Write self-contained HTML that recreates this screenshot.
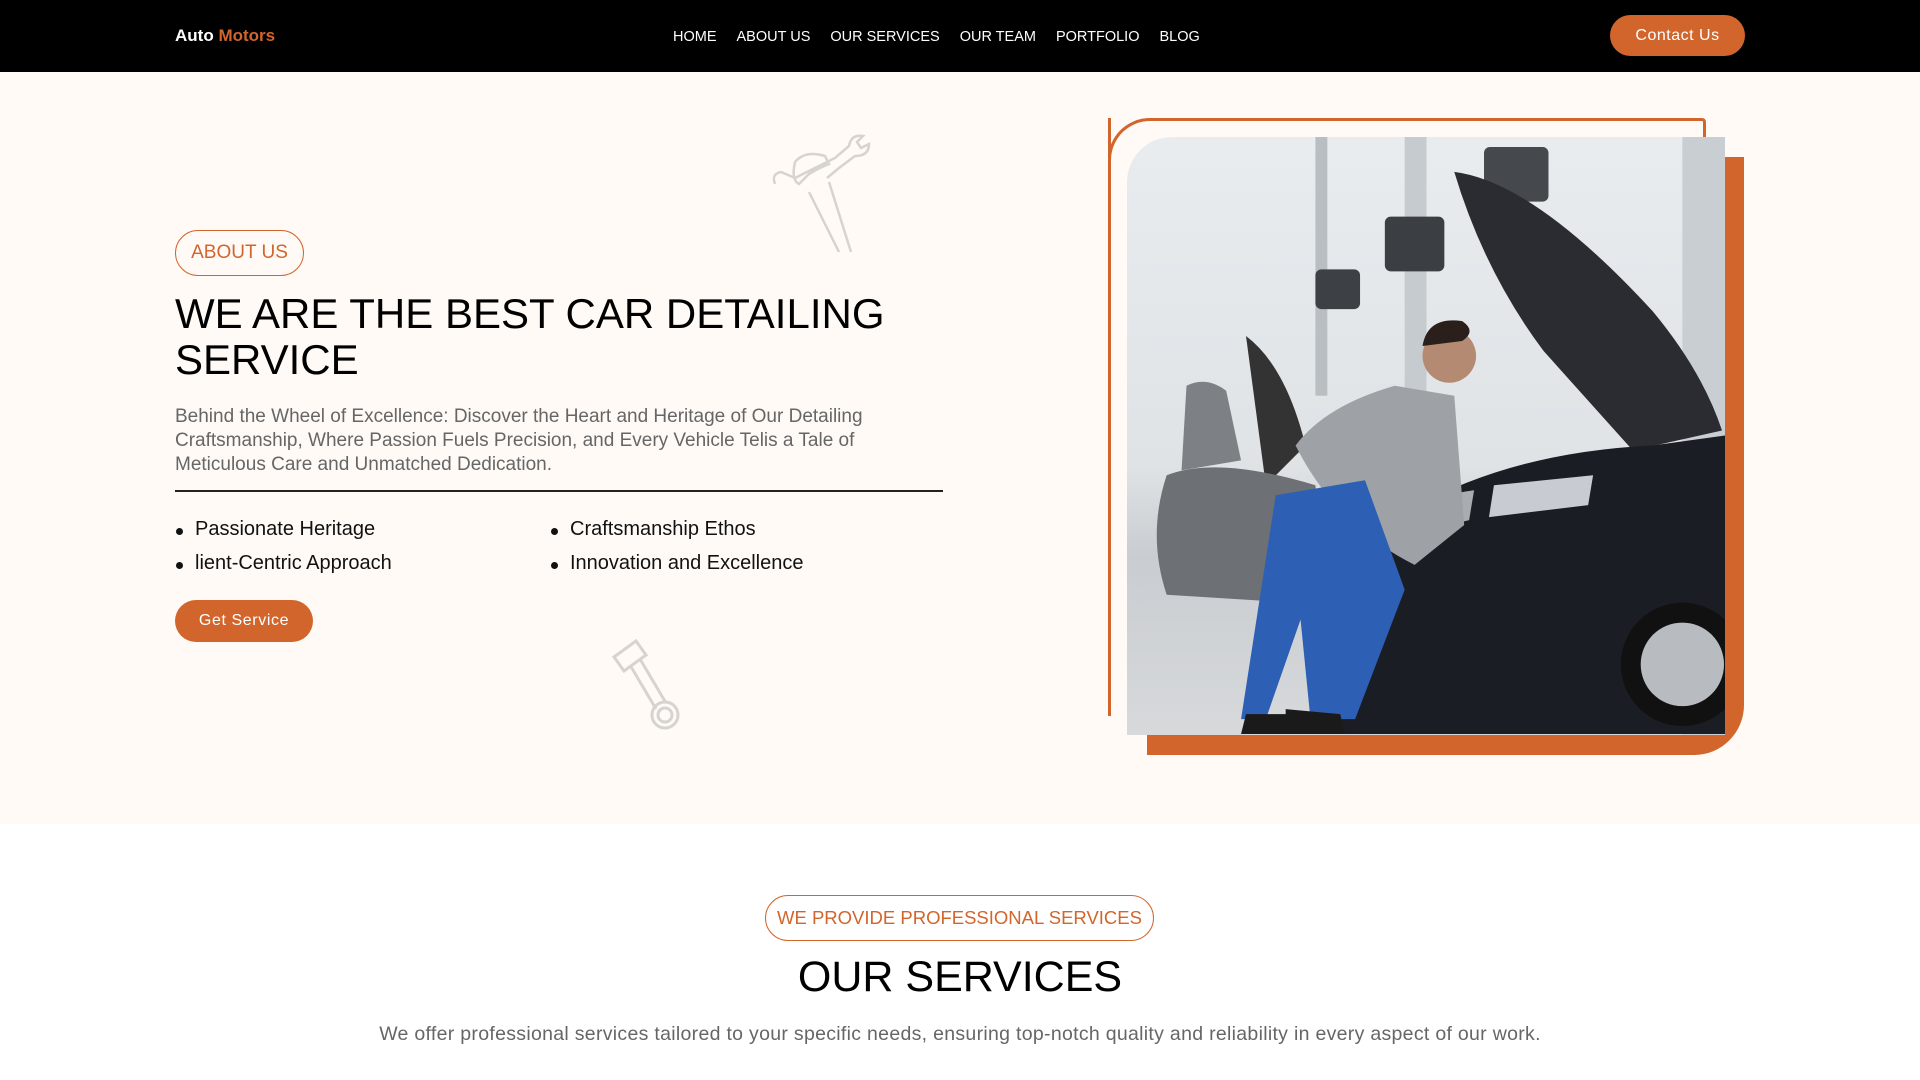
<!DOCTYPE html>
<html><head><meta charset="utf-8"><style>
*{margin:0;padding:0;box-sizing:border-box}
body{width:1920px;height:1080px;overflow:hidden;background:#fff;font-family:"Liberation Sans",sans-serif;position:relative}
.nav{position:absolute;left:0;top:0;width:1920px;height:72px;background:#000;box-shadow:0 2px 3px rgba(0,0,0,.35)}
.logo{position:absolute;left:175px;top:26px;font-size:17px;font-weight:bold;color:#fff}
.logo span{color:#d2652b}
.menu{position:absolute;left:673px;top:29px;font-size:14.5px;color:#fff;white-space:nowrap}
.menu span{margin-right:20px}
.cbtn{position:absolute;left:1610px;top:15px;width:135px;height:41px;border-radius:21px;background:#d2652b;color:#fff;font-size:16px;text-align:center;line-height:42px;letter-spacing:.5px}
.hero{position:absolute;left:0;top:72px;width:1920px;height:752px;background:#fffaf6}
.pill{position:absolute;border:1.5px solid #d2652b;border-radius:24px;color:#d2652b;font-size:19px;text-align:center}
h1{position:absolute;left:175px;top:291px;font-size:42px;font-weight:normal;line-height:46px;color:#000;width:800px}
.p{position:absolute;left:175px;top:405px;width:770px;font-size:19px;line-height:24px;color:#666}
.hr{position:absolute;left:175px;top:490px;width:768px;height:2px;background:#222}
.li{position:absolute;font-size:20px;color:#111;font-weight:500}
.li:before{content:"";position:absolute;left:-19px;top:10px;width:7px;height:7px;border-radius:50%;background:#111}
.gbtn{position:absolute;left:175px;top:600px;width:138px;height:42px;border-radius:21px;background:#d2652b;color:#fff;font-size:16px;text-align:center;line-height:42px;letter-spacing:.6px}
</style></head><body>
<div class="nav">
<div class="logo">Auto <span>Motors</span></div>
<div class="menu"><span>HOME</span><span>ABOUT US</span><span>OUR SERVICES</span><span>OUR TEAM</span><span>PORTFOLIO</span><span>BLOG</span></div>
<div class="cbtn">Contact Us</div>
</div>
<div class="hero">
<svg style="position:absolute;left:765px;top:50px" width="130" height="130" viewBox="0 0 130 130" fill="none" stroke="#d6d3d0" stroke-width="2.5"><path d="M10 62 q-4-10 6-12 l14 6 l40-20 l14-12 q2-12 14-10 l-6 6 l4 6 l8-4 q0 12-14 12 l-16 12 l-12 10 M30 40 q10-12 30-6 l4 8 q-10 4-20 10 l-10 10 q-8-4-4-22 M44 70 l30 60 M64 60 l22 70"/></svg>
<svg style="position:absolute;left:610px;top:565px" width="80" height="100" viewBox="0 0 80 100" fill="none" stroke="#d6d3d0" stroke-width="3"><path d="M4 20 l22-16 l10 14 l-22 16 z M20 28 l26 44 M30 22 l26 44"/><circle cx="55" cy="78" r="13"/><circle cx="55" cy="78" r="7"/></svg>
</div>
<div class="pill" style="left:175px;top:230px;width:129px;height:46px;line-height:44px">ABOUT US</div>
<h1>WE ARE THE BEST CAR DETAILING SERVICE</h1>
<div class="p">Behind the Wheel of Excellence: Discover the Heart and Heritage of Our Detailing Craftsmanship, Where Passion Fuels Precision, and Every Vehicle Telis a Tale of Meticulous Care and Unmatched Dedication.</div>
<div class="hr"></div>
<div class="li" style="left:195px;top:518px">Passionate Heritage</div>
<div class="li" style="left:570px;top:518px">Craftsmanship Ethos</div>
<div class="li" style="left:195px;top:552px">lient-Centric Approach</div>
<div class="li" style="left:570px;top:552px">Innovation and Excellence</div>
<div class="gbtn">Get Service</div>
<div style="position:absolute;left:1108px;top:118px;width:598px;height:596px;border:3px solid #d2652b;border-radius:42px 4px 0 0;border-bottom:none"></div>
<div style="position:absolute;left:1108px;top:118px;width:3px;height:598px;background:#d2652b"></div>
<div style="position:absolute;left:1147px;top:157px;width:597px;height:598px;background:#d2652b;border-radius:0 0 50px 0"></div>
<svg style="position:absolute;left:1127px;top:137px;border-radius:45px 0 0 0" width="598" height="598" viewBox="0 0 603 601" preserveAspectRatio="none">
<defs><linearGradient id="bg" x1="0" y1="0" x2="0" y2="1"><stop offset="0" stop-color="#e8ecef"/><stop offset=".55" stop-color="#dfe3e6"/><stop offset=".7" stop-color="#c9cdd1"/><stop offset="1" stop-color="#d7d9db"/></linearGradient></defs>
<rect width="603" height="601" fill="url(#bg)"/>
<rect x="190" y="0" width="12" height="260" fill="#b9bec3"/>
<rect x="280" y="0" width="22" height="400" fill="#c6cbcf"/>
<rect x="560" y="0" width="43" height="601" fill="#c9ced2"/>
<rect x="190" y="133" width="45" height="40" rx="6" fill="#3d4044"/>
<rect x="260" y="80" width="60" height="55" rx="6" fill="#3b3e42"/>
<rect x="360" y="10" width="65" height="55" rx="6" fill="#45484c"/>
<path d="M120 200 q40 30 60 110 l-40 40 z" fill="#333"/>
<path d="M40 340 q50-20 150 10 l10 120 l-160-10 q-20-60 0-120z" fill="#6d7074"/>
<path d="M60 250 q20-10 40 5 l15 70 l-60 10z" fill="#7d8186"/>
<path d="M330 35 q80 10 200 140 q50 60 70 120 l-90 20 l-90-100 q-60-80-90-180z" fill="#2b2c31"/>
<path d="M200 440 q120-120 330-130 l73-10 l0 300 l-390 0 q-30-80-13-160z" fill="#1b1d24"/>
<path d="M270 380 q40-20 80-25 l-5 30 l-60 15 z" fill="#a9adb2"/>
<path d="M370 350 l100-10 l-5 30 l-100 12z" fill="#c8ccd2"/>
<circle cx="560" cy="530" r="62" fill="#111"/><circle cx="560" cy="530" r="42" fill="#b8bcc1"/>
<path d="M170 310 q30-40 100-60 l60 10 l10 130 l-50 40 q-80-40-120-120z" fill="#9ea2a6"/>
<circle cx="325" cy="220" r="27" fill="#b58a72"/><path d="M298 210 q5-30 40-25 q15 10 0 20z" fill="#2a1f1a"/>
<path d="M150 360 l90-15 l40 110 l-50 130 l-45 0 l-10-100 l-35 100 l-25 0 z" fill="#2d5fb5"/>
<path d="M120 580 l40 0 l5 20 l-50 0z M160 575 l55 5 l5 20 l-60 0z" fill="#1a1a1a"/>
</svg>
<div class="pill" style="left:765px;top:895px;width:389px;height:46px;line-height:44px;font-size:18.5px">WE PROVIDE PROFESSIONAL SERVICES</div>
<div style="position:absolute;left:0;top:953px;width:1920px;text-align:center;font-size:43px;color:#000">OUR SERVICES</div>
<div style="position:absolute;left:0;top:1023px;width:1920px;text-align:center;font-size:19.5px;letter-spacing:.3px;color:#666">We offer professional services tailored to your specific needs, ensuring top-notch quality and reliability in every aspect of our work.</div>
</body></html>
